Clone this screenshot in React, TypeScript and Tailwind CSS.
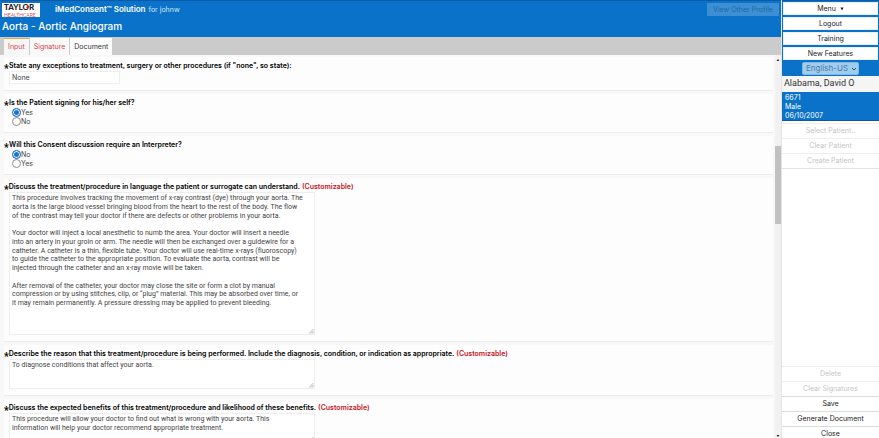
import type { ReactNode } from "react";

const DISCUSSION = `This procedure involves tracking the movement of x-ray contrast (dye) through your aorta. The
aorta is the large blood vessel bringing blood from the heart to the rest of the body. The flow
of the contrast may tell your doctor if there are defects or other problems in your aorta.

Your doctor will inject a local anesthetic to numb the area. Your doctor will insert a needle
into an artery in your groin or arm. The needle will then be exchanged over a guidewire for a
catheter. A catheter is a thin, flexible tube. Your doctor will use real-time x-rays (fluoroscopy)
to guide the catheter to the appropriate position. To evaluate the aorta, contrast will be
injected through the catheter and an x-ray movie will be taken.

After removal of the catheter, your doctor may close the site or form a clot by manual
compression or by using stitches, clip, or “plug” material. This may be absorbed over time, or
it may remain permanently. A pressure dressing may be applied to prevent bleeding.`;

const BENEFITS = `This procedure will allow your doctor to find out what is wrong with your aorta. This
information will help your doctor recommend appropriate treatment.`;

function Logo() {
  return (
    <svg viewBox="0 0 38 14" className="h-3.5 w-[38px] shrink-0 bg-white" role="img" aria-label="Taylor Healthcare">
      <text x="2" y="7" fontSize="8" fontWeight="900" fill="#26262e" fontFamily="Lato, sans-serif">
        TAYLOR
      </text>
      <circle cx="25.5" cy="3" r="0.9" fill="#d8232a" />
      <path d="M24.1 4.4h2.8M25.5 4v2.6" stroke="#d8232a" strokeWidth="0.8" />
      <text x="2" y="13.5" fontSize="5" fill="#d0565a" fontFamily="Lato, sans-serif">
        HEALTHCARE
      </text>
    </svg>
  );
}

function Card({ children }: { children: ReactNode }) {
  return (
    <section className="border-b border-[#ececec] bg-[#fdfdfd] pt-1 pr-2 pb-1.5 pl-[5px]">{children}</section>
  );
}

function Label({ text, customizable }: { text: string; customizable?: boolean }) {
  return (
    <span className="-ml-[5px] flex h-2.5 text-[7px] leading-[10px] font-semibold whitespace-nowrap text-black">
      <span aria-hidden="true" className="w-[5px] font-[Roboto,sans-serif] text-[10px] leading-[15px] font-black">
        *
      </span>
      {text}
      {customizable && <span className="ml-0.5 text-[#c8141c]">(Customizable)</span>}
    </span>
  );
}

function RadioCard({ name, text, options }: { name: string; text: string; options: string[] }) {
  return (
    <Card>
      <fieldset>
        <legend>
          <Label text={text} />
        </legend>
        {options.map((option, i) => (
          <label key={option} className="flex h-[9px] items-center pl-[3px] text-[7px] leading-[9px] text-[#444]">
            <input
              type="radio"
              name={name}
              defaultChecked={i === 0}
              className="size-[9px] appearance-none rounded-full border border-[#8f8f8f] bg-white checked:border-[#1a75d2] checked:bg-[#1a75d2] checked:shadow-[inset_0_0_0_1px_white]"
            />
            {option}
          </label>
        ))}
      </fieldset>
    </Card>
  );
}

function TextCard({ text, value, size }: { text: string; value: string; size: string }) {
  return (
    <Card>
      <label className="relative block w-[306px]">
        <Label text={text} customizable />
        <textarea
          defaultValue={value}
          className={`block w-full resize-none overflow-hidden border border-[#eeeeee] bg-white px-0.5 pt-px font-[Roboto,sans-serif] text-[7px] leading-tight whitespace-pre text-[#444] ${size}`}
        />
        <svg viewBox="0 0 6 6" className="pointer-events-none absolute right-px bottom-px size-1.5">
          <path d="M1 5.5 5.5 1M3 5.5 5.5 3M4.5 5.5l1-1" stroke="#999" strokeWidth="0.7" />
        </svg>
      </label>
    </Card>
  );
}

function MenuButton({ children }: { children: ReactNode }) {
  return (
    <button className="flex h-[13px] w-full items-center justify-center gap-1 border border-[#e8f1f9] bg-white text-[7px] leading-[11px] text-[#222]">
      {children}
    </button>
  );
}

function ActionButton({ children, disabled }: { children: ReactNode; disabled?: boolean }) {
  return (
    <button
      disabled={disabled}
      className="block h-[15px] w-full border-t border-[#dcdcdc] text-center text-[7px] leading-[14px] text-[#222] disabled:border-[#efefef] disabled:text-[#c4c4c4]"
    >
      {children}
    </button>
  );
}

function Scrollbar() {
  return (
    <div aria-hidden="true" className="flex w-1.5 shrink-0 flex-col items-center bg-[#f1f1f1]">
      <svg viewBox="0 0 6 8" className="h-2 w-1.5">
        <path d="M1.5 6 3 4l1.5 2z" fill="#333" />
      </svg>
      <div className="flex-[83]" />
      <div className="w-full flex-[78] bg-[#c1c1c1]" />
      <div className="flex-[210]" />
      <svg viewBox="0 0 6 4" className="h-1 w-1.5">
        <path d="M1.5 1h3L3 3z" fill="#333" />
      </svg>
    </div>
  );
}

function Sidebar() {
  return (
    <aside className="flex w-[98px] shrink-0 flex-col overflow-hidden border-l border-[#e4e4e4] bg-white">
      <div className="flex flex-col items-center gap-0.5 border-t border-[#0b5aa5] bg-[#0a73c9] px-px pt-px">
        <MenuButton>
          Menu
          <svg viewBox="0 0 4 4" className="size-1">
            <path d="M0.4 0.5h3.2L2 3.6z" fill="#222" />
          </svg>
        </MenuButton>
        <MenuButton>Logout</MenuButton>
        <MenuButton>Training</MenuButton>
        <MenuButton>New Features</MenuButton>
        <div className="relative mb-px w-[57px]">
          <select
            aria-label="Language"
            className="block h-[13px] w-full appearance-none rounded-xs border border-[#7fb9e6] bg-[#9fcdf0] pl-[3px] text-[8px] leading-[11px] text-[#4f7b9c]"
          >
            <option>English-US</option>
          </select>
          <svg viewBox="0 0 6 4" className="pointer-events-none absolute top-[5px] right-0.5 h-1 w-1.5">
            <path d="m1 1 2 2 2-2" fill="none" stroke="#3d4f5e" />
          </svg>
        </div>
      </div>
      <h2 className="h-4 bg-[#f5f5f5] pl-0.5 font-[Roboto,sans-serif] text-[9px] leading-[15px] text-[#333]">
        Alabama, David O
      </h2>
      <div className="border-b border-[#0b5aa5] bg-[#0a73c9] pt-px pl-[3px] text-[7px] leading-[9px] text-white">
        <p>6671</p>
        <p>Male</p>
        <p>06/10/2007</p>
      </div>
      <div className="border-b border-[#e4e4e4] pt-0.5">
        <ActionButton disabled>Select Patient..</ActionButton>
        <ActionButton disabled>Clear Patient</ActionButton>
        <ActionButton disabled>Create Patient</ActionButton>
      </div>
      <div className="mt-auto -mb-[3px]">
        <ActionButton disabled>Delete</ActionButton>
        <ActionButton disabled>Clear Signatures</ActionButton>
        <ActionButton>Save</ActionButton>
        <ActionButton>Generate Document</ActionButton>
        <ActionButton>Close</ActionButton>
      </div>
    </aside>
  );
}

export default function App() {
  return (
    <div className="flex h-screen overflow-hidden bg-white font-[Inter,sans-serif]">
      <div className="flex min-w-0 flex-1 flex-col">
        <header className="h-[37px] shrink-0 border-t border-[#0b5aa5] bg-[#0a73c9] px-0.5 text-white">
          <div className="flex h-[17px] items-center">
            <Logo />
            <p className="ml-[15px] text-[8px] leading-4 font-semibold whitespace-nowrap">
              iMedConsent™ Solution <span className="ml-px text-[7px] font-normal text-[#d3e7f7]">for johnw</span>
            </p>
            <button
              disabled
              className="ml-auto h-[13px] w-[72px] bg-[#3b8fd2] text-[7px] leading-[13px] whitespace-nowrap text-[#1e69a6]"
            >
              View Other Profile
            </button>
          </div>
          <h1 className="text-[10px] leading-4 font-medium">Aorta - Aortic Angiogram</h1>
        </header>

        <nav className="flex h-[18px] shrink-0 items-end gap-px bg-[#cbcbcb] pl-1 text-[7px] leading-4">
          <a href="#input" className="h-[17px] border-t border-[#f0a34a] bg-[#f7f7f7] px-1 text-[#d8434b]">
            Input
          </a>
          <a href="#signature" className="h-[17px] border-t border-white bg-[#f9f9f9] px-1 text-[#d8434b]">
            Signature
          </a>
          <a href="#document" className="h-[17px] border-t border-white bg-[#fdfdfd] px-1 text-[#333]">
            Document
          </a>
        </nav>

        <div className="flex min-h-0 flex-1">
          <main className="flex min-w-0 flex-1 flex-col gap-[3px] overflow-hidden bg-[#f8f8f8] pt-0.5 pr-0.5 pl-1">
            <Card>
              <label className="block">
                <Label text={'State any exceptions to treatment, surgery or other procedures (if "none", so state):'} />
                <input
                  type="text"
                  defaultValue="None"
                  className="block h-[13px] w-[111px] border border-[#eeeeee] bg-white px-0.5 text-[7px] text-[#444]"
                />
              </label>
            </Card>
            <RadioCard name="self" text="Is the Patient signing for his/her self?" options={["Yes", "No"]} />
            <RadioCard
              name="interpreter"
              text="Will this Consent discussion require an Interpreter?"
              options={["No", "Yes"]}
            />
            <TextCard
              text="Discuss the treatment/procedure in language the patient or surrogate can understand."
              value={DISCUSSION}
              size="h-[143px]"
            />
            <TextCard
              text="Describe the reason that this treatment/procedure is being performed. Include the diagnosis, condition, or indication as appropriate."
              value="To diagnose conditions that affect your aorta."
              size="h-[30px]"
            />
            <TextCard
              text="Discuss the expected benefits of this treatment/procedure and likelihood of these benefits."
              value={BENEFITS}
              size="h-[30px]"
            />
          </main>
          <Scrollbar />
        </div>
      </div>
      <Sidebar />
    </div>
  );
}
